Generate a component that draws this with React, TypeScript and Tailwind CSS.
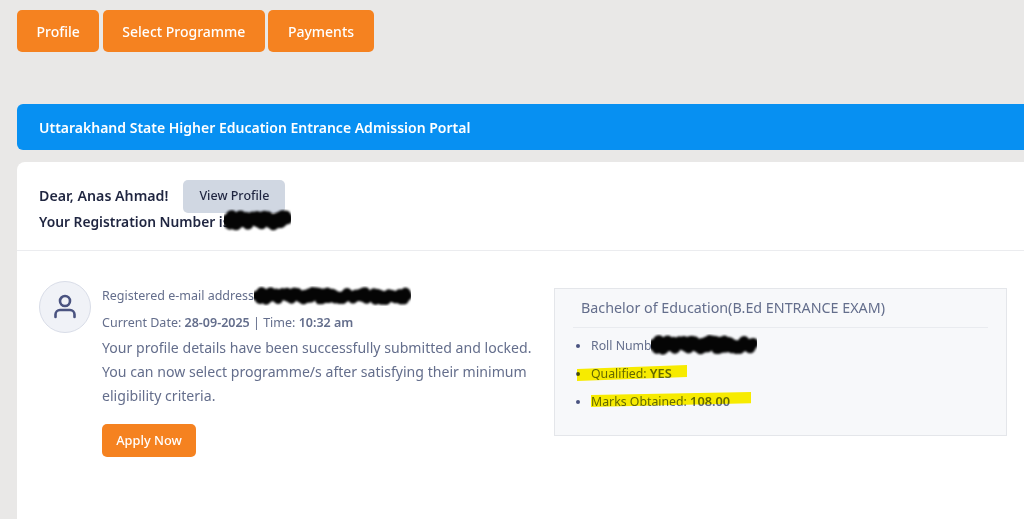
// dense back-and-forth pen strokes, same shape on every render
const scribblePath = (w: number, h: number) => {
  let d = `M3 ${h / 2}`;
  let seed = 7;
  for (let x = 3; x < w - 3; x += 1.5) {
    seed = (seed * 73 + 41) % 101;
    const y = h * 0.3 + (seed / 101) * h * 0.4;
    d += ` L${x.toFixed(1)} ${y.toFixed(1)}`;
  }
  return d;
};

const Scribble = ({ className, w, h }: { className: string; w: number; h: number }) => (
  <svg className={className} width={w} height={h} viewBox={`0 0 ${w} ${h}`} fill="none">
    <path
      d={scribblePath(w, h)}
      stroke="#050505"
      strokeWidth={h * 0.5}
      strokeLinecap="round"
      strokeLinejoin="round"
      className="blur-[0.8px]"
    />
  </svg>
);

const Marker = ({ className, d }: { className: string; d: string }) => (
  <svg className={className} viewBox="0 0 200 20" preserveAspectRatio="none">
    <path d={d} fill="#fff200" />
  </svg>
);

const App = () => {
  return (
    <div className="w-[1024px] h-[519px] overflow-hidden bg-[#e9e8e7] font-['Noto_Sans',sans-serif] text-[#1f2540]">
      <div className="flex gap-[3.5px] pl-[17px] pt-[10px]">
        {["Profile", "Select Programme", "Payments"].map((label) => (
          <button
            key={label}
            className="h-[42px] px-[19.5px] rounded-[5px] bg-[#f58220] text-white text-[14px] font-medium"
          >
            {label}
          </button>
        ))}
      </div>

      <div className="ml-[17px] mt-[52px] h-[46px] rounded-l-[6px] bg-[#0790f2] flex items-center pl-[22px] text-white text-[14px] font-semibold">
        Uttarakhand State Higher Education Entrance Admission Portal
      </div>

      <div className="ml-[17px] mt-[12px] h-[357px] rounded-tl-[8px] bg-white">
        <div className="relative h-[89px] border-b border-[#ebecef] pl-[22px] pt-[18px]">
          <div className="flex items-center gap-[15px] h-[32px] text-[14.2px] font-semibold">
            <span>Dear, Anas Ahmad!</span>
            <button className="h-[33px] w-[102px] rounded-[5px] bg-[#d0d7e2] text-[12.5px] font-medium">View Profile</button>
          </div>
          <div className="-mt-[2px] text-[13.8px] font-semibold leading-[24px]">Your Registration Number is</div>
          <Scribble className="absolute left-[207px] top-[47px]" w={67} h={23} />
        </div>

        <div className="flex pt-[30px]">
          <div className="w-[537px] flex pl-[22px] gap-[11px]">
            <div className="w-[52px] h-[52px] shrink-0 rounded-full bg-[#f0f2f7] border border-[#d9dde8] flex items-center justify-center">
              <svg width="24" height="26" viewBox="0 0 24 26" fill="none" stroke="#4a5380" strokeWidth="2.6" strokeLinecap="round">
                <circle cx="12" cy="7" r="5" />
                <path d="M2.500 23v-2.500c0-2.500 2-4.500 4.500-4.500h10c2.500 0 4.500 2 4.500 4.500V23" />
              </svg>
            </div>
            <div className="relative text-[#646e8c]">
              <div className="text-[12.5px] leading-[20px] mt-[5px]">Registered e-mail address</div>
              <Scribble className="absolute left-[152px] top-[5px]" w={157} h={20} />
              <div className="text-[12.5px] leading-[20px] mt-[7px]">
                Current Date: <b className="font-semibold">28-09-2025</b> | Time: <b className="font-semibold">10:32 am</b>
              </div>
              <p className="text-[14.1px] leading-[24px] mt-[3px] w-[440px]">
                Your profile details have been successfully submitted and locked. You can now select programme/s after satisfying their minimum eligibility criteria.
              </p>
              <button className="mt-[16px] w-[94px] h-[33px] rounded-[5px] bg-[#f58220] text-white text-[12.8px] font-medium">Apply Now</button>
            </div>
          </div>

          <div className="relative mt-[7px] w-[453px] h-[148px] bg-[#f7f8fa] border border-[#e4e6ea] text-[#646e8c]">
            <div className="mx-[18px] h-[39px] border-b border-[#e9ebef] pl-[8px] pt-[8px] text-[14.3px] leading-[22px]">
              Bachelor of Education(B.Ed ENTRANCE EXAM)
            </div>
            <ul className="pl-[36px] pt-[4px] list-disc marker:text-[#4a5380] text-[12.3px] leading-[28px]">
              <li>Roll Numb</li>
              <li>Qualified: <b className="font-semibold text-[12.8px] leading-none">YES</b></li>
              <li>Marks Obtained: <b className="font-semibold text-[12.8px] leading-none">108.00</b></li>
            </ul>
            <Scribble className="absolute left-[96px] top-[45px]" w={106} h={22} />
            <Marker className="absolute left-[22px] top-[76px] w-[110px] h-[16px] mix-blend-multiply" d="M0 5 L200 0 L200 15 L0 20 Z" />
            <Marker className="absolute left-[36px] top-[103px] w-[160px] h-[15px] mix-blend-multiply" d="M0 4 L200 0 L200 15 L0 20 Z" />
          </div>
        </div>
      </div>
    </div>
  );
};

export default App;
